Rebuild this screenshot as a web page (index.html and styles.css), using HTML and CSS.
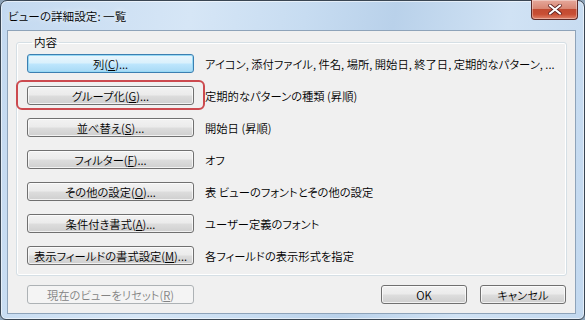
FILE: index.html
```html
<!DOCTYPE html>
<html lang="ja">
<head>
<meta charset="utf-8">
<title>ビューの詳細設定: 一覧</title>
<link rel="stylesheet" href="styles.css">
</head>
<body>
<div class="window">
  <div class="titlebar">
    <span class="title">ビューの詳細設定: 一覧</span>
    <button class="close" aria-label="閉じる">
      <svg width="14" height="11" viewBox="0 0 14 11"><path d="M2 1.5 L12 9.5 M12 1.5 L2 9.5" stroke="#5a1e1e" stroke-width="3.6" stroke-linecap="round"/><path d="M2 1.5 L12 9.5 M12 1.5 L2 9.5" stroke="#ffffff" stroke-width="2.2" stroke-linecap="round"/></svg>
    </button>
  </div>
  <div class="client">
    <fieldset class="group">
      <legend>内容</legend>
      <div class="row"><button class="btn default">列(<u>C</u>)...</button><span class="desc">アイコン, 添付ファイル, 件名, 場所, 開始日, 終了日, 定期的なパターン, ...</span></div>
      <div class="row"><span class="mark"><button class="btn">グループ化(<u>G</u>)...</button></span><span class="desc">定期的なパターンの種類 (昇順)</span></div>
      <div class="row"><button class="btn">並べ替え(<u>S</u>)...</button><span class="desc">開始日 (昇順)</span></div>
      <div class="row"><button class="btn">フィルター(<u>F</u>)...</button><span class="desc">オフ</span></div>
      <div class="row"><button class="btn">その他の設定(<u>O</u>)...</button><span class="desc">表 ビューのフォントとその他の設定</span></div>
      <div class="row"><button class="btn">条件付き書式(<u>A</u>)...</button><span class="desc">ユーザー定義のフォント</span></div>
      <div class="row"><button class="btn">表示フィールドの書式設定(<u>M</u>)...</button><span class="desc">各フィールドの表示形式を指定</span></div>
    </fieldset>
    <div class="footer">
      <button class="btn disabled" disabled>現在のビューをリセット(<u>R</u>)</button>
      <div class="actions">
        <button class="btn small">OK</button>
        <button class="btn small">キャンセル</button>
      </div>
    </div>
  </div>
</div>
</body>
</html>
```
FILE: styles.css
```css
* { box-sizing: border-box; }
html, body { margin: 0; padding: 0; }
body {
  width: 585px;
  height: 320px;
  overflow: hidden;
  background: #8da3b8;
  font-family: "Noto Sans CJK JP", "Noto Sans", sans-serif;
  font-size: 11.3px;
  font-weight: 350;
  font-feature-settings: "palt";
  color: #000;
}
.window {
  width: 585px;
  height: 320px;
  border: 1px solid #3a4653;
  border-radius: 7px 7px 6px 6px;
  background: linear-gradient(100deg, #c3d9f0 0%, #d6e6f6 30%, #c7dcf1 48%, #b9d1ea 62%, #d0e2f4 80%, #c2d8ef 100%);
  box-shadow: inset 0 0 0 1px rgba(255,255,255,.55);
  display: flex;
  flex-direction: column;
  padding: 0 8px 5px 6px;
}
.titlebar {
  height: 29px;
  display: flex;
  align-items: flex-start;
  justify-content: space-between;
}
.title {
  padding: 7px 0 0 1px;
  line-height: 16px;
  font-size: 11.6px;
  color: #000;
  text-shadow: 0 0 6px rgba(255,255,255,.9);
}
.close {
  width: 47px;
  height: 20px;
  margin: -1px -2px 0 0;
  border: 1px solid #5c2a28;
  border-top: none;
  border-radius: 0 0 4px 4px;
  background: linear-gradient(#e6a89b 0%, #d88774 45%, #c24b32 50%, #c84e34 75%, #e0826a 100%);
  box-shadow: inset 0 0 0 1px rgba(255,255,255,.35);
  display: flex;
  align-items: center;
  justify-content: center;
  padding: 0;
}
.client {
  flex: 1;
  background: #f0f0f0;
  border: 1px solid #8ea3b9;
  padding: 4px 8px 0 8px;
  display: flex;
  flex-direction: column;
}
.group {
  margin: 0;
  border: 1px solid #d5dfe5;
  border-radius: 3px;
  box-shadow: 0 0 0 1px #ffffff inset;
  padding: 5px 10px 10px 10px;
  display: flex;
  flex-direction: column;
  gap: 13px;
}
.group legend {
  padding: 0 2px;
  margin-left: 5px;
  line-height: 14px;
  font-size: 11.6px;
}
.row {
  display: flex;
  align-items: center;
  gap: 11px;
  height: 19px;
}
.desc {
  white-space: nowrap;
  line-height: 16px;
  padding-top: 1px;
}
.btn {
  font: inherit;
  color: #000;
  width: 167px;
  height: 19px;
  padding: 1px 0 0;
  line-height: 16px;
  border: 1px solid #707070;
  border-radius: 3px;
  background: linear-gradient(#f2f2f2 0%, #ebebeb 48%, #dddddd 52%, #cfcfcf 100%);
  box-shadow: inset 0 0 0 1px rgba(255,255,255,.7);
  white-space: nowrap;
  flex: none;
}
.btn.default {
  border-color: #3c7fb1;
  background: linear-gradient(#eaf6fd 0%, #d9f0fc 48%, #bee6fd 52%, #a7d9f5 100%);
  box-shadow: inset 0 0 0 1px #97d9f5;
}
.btn u { text-underline-offset: 1px; }
.mark {
  position: relative;
  display: flex;
}
.mark::before {
  content: "";
  position: absolute;
  left: -11px;
  right: -11px;
  top: -6px;
  bottom: -5px;
  border: 2px solid #cc4a4f;
  border-radius: 6px;
  pointer-events: none;
}
.footer {
  display: flex;
  justify-content: space-between;
  align-items: center;
  padding: 9px 1px 0 11px;
}
.actions {
  display: flex;
  gap: 13px;
}
.btn.small { width: 86px; }
.btn.disabled {
  color: #838383;
  border-color: #adb2b5;
  background: #f4f4f4;
  box-shadow: none;
}
```
